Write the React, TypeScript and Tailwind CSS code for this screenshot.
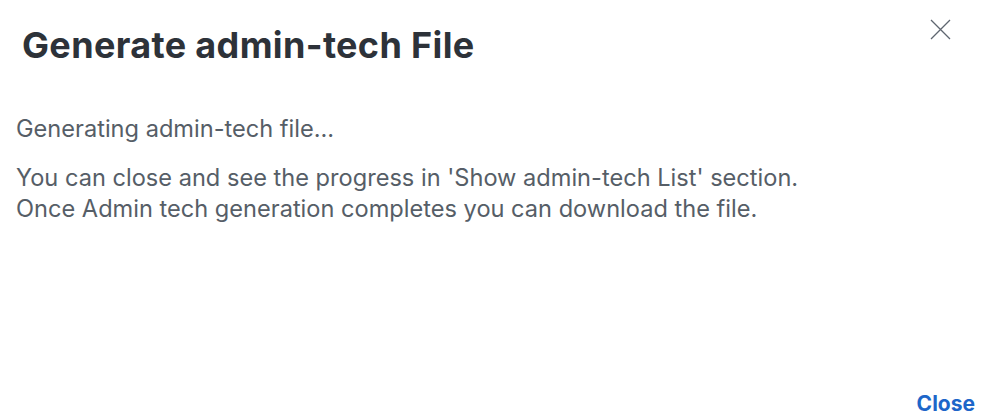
import React from 'react';

const GenerateAdminTechDialog = () => {
  return (
    <div className="w-[999px] h-[420px] bg-white relative overflow-hidden" style={{ fontFamily: 'Inter, "Noto Sans", sans-serif' }}>
      {/* Close icon */}
      <button className="absolute top-[19px] right-[48px] text-[#5f6670]" aria-label="close">
        <svg width="21" height="21" viewBox="0 0 21 21" fill="none" stroke="currentColor" strokeWidth="1.3">
          <path d="M1 1 L20 20 M20 1 L1 20" />
        </svg>
      </button>

      <div className="flex flex-col h-full">
        {/* Header */}
        <div className="pl-[22px] pt-[23px]">
          <h2 className="text-[36px] leading-[44px] font-bold text-[#2d3239] tracking-[0.35px]">Generate admin-tech File</h2>
        </div>

        {/* Body */}
        <div className="pl-[16px] pt-[46px] text-[23.6px] leading-[31px] text-[#565e67]">
          <p>Generating admin-tech file...</p>
          <p className="mt-[18px]">
            You can close and see the progress in 'Show admin-tech List' section.
            <br />
            Once Admin tech generation completes you can download the file.
          </p>
        </div>

        {/* Footer */}
        <div className="mt-auto flex justify-end pr-[24px] pb-[2px]">
          <button className="text-[21px] leading-[28px] font-bold text-[#1d66c9]">Close</button>
        </div>
      </div>
    </div>
  );
};

export default GenerateAdminTechDialog;
